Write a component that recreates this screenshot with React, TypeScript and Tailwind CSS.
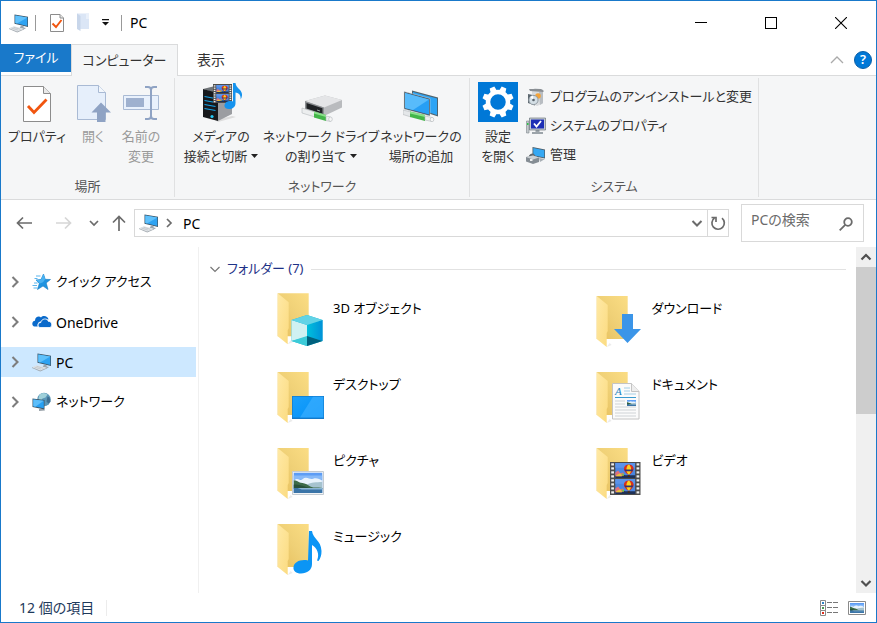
import React from "react";
import type { ReactNode } from "react";

type IconProps = { className?: string };

function PcIcon({ className = "h-5 w-5" }: IconProps) {
  return (
    <svg viewBox="0 0 20 20" className={className} aria-hidden="true">
      <path d="M5.500 1.500 19 3.800V14L5.500 10.800z" fill="#3d5566" />
      <path d="M6.300 2.500 18.300 4.500V13L6.300 10.100z" fill="#2ea3f2" />
      <path d="M6.300 2.500 18.300 4.500 8 10.500 6.300 10.100z" fill="#5fc1fb" />
      <path d="M12 12.400l2.600.6v1.500l2.500.5-2 1.200-4.500-1z" fill="#9aa5ad" />
      <path d="M0 15.300 5 13.300l10 2.400L8.200 18.500z" fill="#dfe3e6" />
      <path d="M0 15.300 8.200 18.500 15 15.700v.9L8.200 19.500 0 16.100z" fill="#a3aab0" />
      <path d="M2.500 15.100l6.500 2M4.500 14.300l7 2" stroke="#b4bbc1" strokeWidth=".6" />
    </svg>
  );
}

function CheckDocIcon({ className }: IconProps) {
  return (
    <svg viewBox="0 0 28 36" className={className} aria-hidden="true">
      <path d="M.5.500h20l7 7v28H.5z" fill="#fff" stroke="#8c8c8c" />
      <path d="M20.500.500v7h7" fill="#e9e9e9" stroke="#8c8c8c" />
      <path d="M5 20l6 6.500L23.500 13.500" fill="none" stroke="#f1550f" strokeWidth="2.800" />
    </svg>
  );
}

function QuickCheckIcon() {
  return (
    <svg viewBox="0 0 14 18" className="h-[18px] w-3.5" aria-hidden="true">
      <path d="M.5.500h9.500l3.500 3.500v13.500H.5z" fill="#fff" stroke="#8c8c8c" />
      <path d="M10 .500V4h3.500" fill="#e9e9e9" stroke="#8c8c8c" />
      <path d="M2.500 9.500l3.500 3.500 5.500-7" fill="none" stroke="#f1550f" strokeWidth="1.900" />
    </svg>
  );
}

function QuickFolderIcon() {
  return (
    <svg viewBox="0 0 14 19" className="h-[19px] w-[14px]" aria-hidden="true">
      <path d="M1 .5h12V16H4z" fill="#dbe6f6" />
      <path d="M1 .5 4.500 3v15L1 16z" fill="#c8d6ea" />
      <path d="M10 .5h3V6h-3z" fill="#e9f0fa" />
    </svg>
  );
}

function OpenIcon() {
  return (
    <svg viewBox="0 0 36 40" className="h-10 w-9" aria-hidden="true">
      <path d="M2.500 3.500h21l7 7v27h-28z" fill="#e6effb" stroke="#a9bad4" />
      <path d="M23.500 3.500v7h7" fill="#f3f7fc" stroke="#a9bad4" />
      <path d="M26 20.500l10 10h-5.500V40h-8.500v-9.500h-5.500z" fill="#8fa3c4" />
    </svg>
  );
}

function RenameIcon() {
  return (
    <svg viewBox="0 0 38 40" className="h-10 w-[38px]" aria-hidden="true">
      <path d="M1.500 13.500h35v14h-35z" fill="#e9f1fc" stroke="#a9bad4" />
      <path d="M4 16h18v9H4z" fill="#9fb1cf" />
      <path d="M23 5h3q3 0 3 3v26q0 3-3 3h-3M35 5h-3q-3 0-3 3v26q0 3 3 3h3" fill="none" stroke="#8fa3c4" strokeWidth="2" />
    </svg>
  );
}

function Balloons() {
  return (
    <g>
      <path d="M0 0h20v16H0z" fill="#4b86e0" />
      <path d="M0 0h20v5H0z" fill="#5b93ea" />
      <path d="M0 13c3-2 7-1 10 0l10 0v3H0z" fill="#1f3157" />
      <path d="M0 10l3-2 2 3 3-1 1 3-3 1H0z" fill="#e0707a" />
      <path d="M1 13l4-2 2 3H1z" fill="#e8c33a" />
      <path d="M6 11l3 1-1 2z" fill="#6ccf3c" />
      <path d="M13.500 1.500c5 0 6 5 3.500 8l-2 2.500h-3L10 9.500c-2.500-3-1.500-8 3.500-8z" fill="#d8301c" />
      <path d="M13.500 1.500c-3 2-3 8-.5 10.500h1c2.500-2.500 2.500-8.500-.5-10.500z" fill="#ffd21c" />
      <path d="M9 7h9l-1 1.800h-7z" fill="#38306e" />
      <path d="M12.500 13h2v2h-2z" fill="#4d2b10" />
    </g>
  );
}

function Film({ x, y, w, h }: { x: number; y: number; w: number; h: number }) {
  const holes = Array.from({ length: 8 }, (_, i) => y + 1.3 + (i * (h - 1)) / 8);
  return (
    <g>
      <rect x={x} y={y} width={w} height={h} fill="#4c4c4c" />
      <svg x={x + w * 0.17} y={y + 1} width={w * 0.66} height={h / 2 - 1.5} viewBox="0 0 20 16" preserveAspectRatio="none">
        <Balloons />
      </svg>
      <svg x={x + w * 0.17} y={y + h / 2 + 0.5} width={w * 0.66} height={h / 2 - 1.5} viewBox="0 0 20 16" preserveAspectRatio="none">
        <Balloons />
      </svg>
      {holes.map((hy) => (
        <g key={hy} fill="#f0f0f0">
          <rect x={x + w * 0.04} y={hy} width={w * 0.09} height={h / 15} />
          <rect x={x + w * 0.87} y={hy} width={w * 0.09} height={h / 15} />
        </g>
      ))}
    </g>
  );
}

function MediaIcon() {
  return (
    <svg viewBox="0 0 42 40" className="h-10 w-[42px]" aria-hidden="true">
      <path d="M32 34l4 1-18 5-3-2z" fill="#dcdcdc" />
      <path d="M3 7l12-3 17 3-14 5z" fill="#6f7478" />
      <path d="M18 11l14-4v25l-14 7z" fill="#9b9da1" />
      <path d="M3 7l15 4v28L3 35z" fill="#17191c" />
      <path d="M4.500 14.500l11 2M4.500 18.500l11 2M4.500 22.500l11 2M4.500 26.500l11 2" stroke="#16a5ea" strokeWidth="1.200" />
      <circle cx="12" cy="34.500" r="1.600" fill="#23c8f5" />
      <Film x={13} y={2} w={19} h={19} />
      <path d="M33 1h2.500c.5 5 6 6.500 6.500 11 .2 2-.5 4-1.500 5.500.8-4.500-2-6.500-5-7V21c0 4-3 6-6.500 6-3 0-5-1.800-4.500-4 .6-3 4.500-4.800 8.500-3.500z" fill="#1593ee" />
    </svg>
  );
}

function CablePlug({ y }: { y: number }) {
  return (
    <g transform={`translate(0 ${y})`}>
      <path d="M2 0l8 2v5L2 4.500z" fill="#e4e7e9" stroke="#b3b8bc" strokeWidth=".6" />
      <path d="M9 1.500l15 3.500v6L9 7z" fill="#43b649" />
      <path d="M9 1.500l15 3.500v2L9 3.500z" fill="#8be08b" />
      <path d="M24 6l7 1.500v4L24 10z" fill="#eceeef" stroke="#b3b8bc" strokeWidth=".6" />
      <ellipse cx="31" cy="9.500" rx="1.800" ry="2.200" fill="#f6f6f6" stroke="#b3b8bc" strokeWidth=".6" />
    </g>
  );
}

function NetDriveIcon() {
  return (
    <svg viewBox="0 0 42 40" className="h-10 w-[42px]" aria-hidden="true">
      <path d="M5 19l20-5.500L42 18v7.500L24 34 5 27z" fill="#b9bbbe" />
      <path d="M5 19l20-5.500L42 18 24 25.500z" fill="#e4e5e7" />
      <path d="M5 19l19 6.500V34L5 27z" fill="#8d9093" />
      <path d="M6.500 21l16 5.300v5.500l-16-5.300z" fill="#1f2225" />
      <path d="M17 28l3 1" stroke="#9aa0a5" />
      <path d="M2 26l13 4v5L2 31z" fill="#eceeef" stroke="#b3b8bc" strokeWidth=".6" />
      <path d="M14 29.500l12 3.500v6l-12-3.500z" fill="#43b649" />
      <path d="M14 29.500l12 3.500v2l-12-3.500z" fill="#8be08b" />
      <path d="M26 34l4.500 1v4.500L26 38.500z" fill="#eceeef" stroke="#b3b8bc" strokeWidth=".6" />
      <ellipse cx="30.500" cy="37.200" rx="1.800" ry="2.200" fill="#f6f6f6" stroke="#b3b8bc" strokeWidth=".6" />
    </svg>
  );
}

function NetPlaceIcon() {
  return (
    <svg viewBox="0 0 36 40" className="h-10 w-9" aria-hidden="true">
      <path d="M9 8.500l26 7v19L9 26z" fill="#50646f" />
      <path d="M10 10l24 6.500v16.500L10 25z" fill="#2da4f5" />
      <path d="M1 9.500l26 7v17.500L1 27z" fill="#46555f" stroke="#d4dce1" strokeWidth=".5" />
      <path d="M2 11l24 6.500v15L2 26z" fill="#279ff5" />
      <path d="M2 11l24 6.500-16 10.500L2 26z" fill="#58bbfb" />
      <g transform="translate(-2 0)"><CablePlug y={28} /></g>
    </svg>
  );
}

function GearIcon() {
  const teeth = [0, 45, 90, 135, 180, 225, 270, 315];
  return (
    <svg viewBox="0 0 40 40" className="h-10 w-10" aria-hidden="true">
      <path d="M0 0h40v40H0z" fill="#0078d7" />
      <circle cx="20" cy="20" r="10" fill="none" stroke="#fff" strokeWidth="4.500" />
      {teeth.map((a) => (
        <path key={a} d="M16.500 10l1-5.700h5l1 5.700z" fill="#fff" transform={`rotate(${a + 22.5} 20 20)`} />
      ))}
    </svg>
  );
}

function UninstallIcon() {
  return (
    <svg viewBox="0 0 20 20" className="h-5 w-5" aria-hidden="true">
      <path d="M6 3l3-2 8 1.500v14L11 19 6 16z" fill="#d9dcdf" />
      <path d="M3 2l12 0 3 2-1 1-13-1z" fill="#8a8f94" />
      <path d="M13 5l4 0v11l-3 2z" fill="#b8bdc2" />
      <circle cx="12" cy="9" r="2.800" fill="#f2a33a" />
      <path d="M2 7l7 1.500v10L2 16z" fill="#5d6870" />
      <circle cx="7.500" cy="13" r="4.600" fill="#d4dfe6" stroke="#929ba2" />
      <path d="M7.500 13L4 10l3-1.500z" fill="#fff" />
      <circle cx="7.500" cy="13" r="1.300" fill="#59636b" />
    </svg>
  );
}

function SystemPropsIcon() {
  return (
    <svg viewBox="0 0 20 20" className="h-5 w-5" aria-hidden="true">
      <path d="M.5 5h2.500v12H.5z" fill="#c4c9cd" stroke="#7e868c" strokeWidth=".6" />
      <path d="M1 7h1.500v2H1z" fill="#2fc24b" />
      <path d="M9.500 13h4v3h3.500v2h-11v-2h3.500z" fill="#9ca4aa" />
      <path d="M3.500 2h16v12h-16z" fill="#c4ccd3" stroke="#5a646c" strokeWidth=".6" />
      <path d="M5 3.500h13v9H5z" fill="#1c2fb5" />
      <path d="M8 7.500l2.500 3L15 5" fill="none" stroke="#fff" strokeWidth="1.800" />
    </svg>
  );
}

function ManageIcon() {
  return (
    <svg viewBox="0 0 20 20" className="h-5 w-5" aria-hidden="true">
      <path d="M6.500 2L19 4.500v9L6.500 11z" fill="#4a5c68" />
      <path d="M7.300 3l11 2.200v7.300l-11-2.200z" fill="#35a8f3" />
      <path d="M13 13l6 1-5 3z" fill="#a8afb5" />
      <path d="M3 10.500q3-3.500 6-.5v2H8q-2-2-4 0H3z" fill="#5f676d" />
      <path d="M0 12l7-1.500 6 2v4.500L7 19l-7-2.500z" fill="#858d94" />
      <path d="M0 12l7-1.500 6 2-6 2z" fill="#cdd2d6" />
      <path d="M4 14h2.500v2H4z" fill="#eef0f1" />
    </svg>
  );
}

function StarIcon() {
  return (
    <svg viewBox="0 0 20 20" className="h-5 w-5" aria-hidden="true">
      <path d="M11.500 2l1.700 5.300 5.300.2-4.300 3.400L16 17.500l-5-3.500-5.500 3.500 1.800-6L4 8l5-.5z" fill="#1f93e0" stroke="#1379c0" strokeWidth=".6" />
      <path d="M11.500 2l1.700 5.300-2.200 3-3.200 1.200L4 8l5-.5z" fill="#49b2f2" />
      <path d="M4 4h4.500M2.500 6.500h3M2 11h3.500M.5 13.500h4.500M1.500 16h4" stroke="#5bb5ee" />
    </svg>
  );
}

function OneDriveIcon() {
  return (
    <svg viewBox="0 0 20 20" className="h-5 w-5" aria-hidden="true">
      <path d="M2.500 14.500C-.5 14-.5 9 3 8.700 3 5 7 3.500 9 5.500c2-2.500 7-1.500 7.500 2-4-1.500-6 0-6.800 2-3-.3-4.700 2-4 5z" fill="#0a6acb" />
      <path d="M8 15.500c-2.800-.5-2.500-5 .8-5 .5-4 6.500-5 7.700-1 3.500-.5 4.500 5 1.500 6z" fill="#0a6acb" stroke="#fff" strokeWidth=".8" />
    </svg>
  );
}

function NetworkIcon() {
  return (
    <svg viewBox="0 0 20 20" className="h-5 w-5" aria-hidden="true">
      <circle cx="12" cy="7.500" r="6.800" fill="#5b97b8" />
      <path d="M7.500 2.500q4-3 8 0l-2 3-3 1-2 3-2-3z" fill="#9fd0d9" />
      <path d="M15.500 4.500l2 1 1 4-2 2-2-2z" fill="#3f6f92" />
      <path d="M7 17h5l1 1.500-6 .5z" fill="#9aa3aa" />
      <path d="M.5 6.500L12.500 8v9.500L.5 15z" fill="#3c5668" />
      <path d="M1.300 7.500l10.500 1.300v7.500L1.300 14.300z" fill="#27a0f3" />
      <path d="M1.300 7.500l10.500 1.300-8.500 5.900-2-.4z" fill="#5dbefa" />
    </svg>
  );
}

function Landscape() {
  return (
    <g>
      <path d="M0 0h28v20H0z" fill="#5c9cf5" />
      <path d="M0 3h28v4H0z" fill="#86b9f8" />
      <path d="M0 8c2-2 4-2 6-1s3-2 6-2 4 2 7 1 6 0 9 2v7H0z" fill="#e9f3fc" />
      <path d="M13 12c4-3 9-2 15-3v6H13z" fill="#a6c3cf" />
      <path d="M0 7.500c3 0 5 2 7 2.500s5 .5 8 3 8 1.500 13 2v1H0z" fill="#3c6b49" />
      <path d="M0 12c5-1 10 2 16 3H0z" fill="#27503a" />
      <path d="M0 15h28v5H0z" fill="#3b75a8" />
      <path d="M4 15h24v1.500H8z" fill="#8db6d3" />
    </g>
  );
}

function FolderIcon({ children, raised }: { children: ReactNode; raised?: boolean }) {
  return (
    <svg viewBox="0 0 50 58" className="h-[58px] w-[50px] shrink-0" aria-hidden="true">
      <defs>
        <linearGradient id="folder-back" x1="0" x2="1" y1="1" y2="0">
          <stop offset="0" stopColor="#e6bf5c" />
          <stop offset=".5" stopColor="#efd076" />
          <stop offset="1" stopColor="#fbdd84" />
        </linearGradient>
        <linearGradient id="folder-front" x1="0" x2="1" y1="0" y2="1">
          <stop offset="0" stopColor="#ffe9a6" />
          <stop offset="1" stopColor="#fbdb80" />
        </linearGradient>
        <linearGradient id="cube-right" x1="0" x2="1">
          <stop offset="0" stopColor="#00c0dc" />
          <stop offset="1" stopColor="#0091d8" />
        </linearGradient>
        <linearGradient id="screen" x1="0" x2="1" y1="0" y2="1">
          <stop offset="0" stopColor="#1ba0fb" />
          <stop offset="1" stopColor="#0090f8" />
        </linearGradient>
      </defs>
      <g transform={raised ? "translate(-.3 .3)" : "translate(-.3 3)"}>
        <path d="M13 53l5-2-2-2z" fill="#ececec" />
        <path d="M3 2h31v43H3z" fill="url(#folder-back)" />
        <path d="M3 2l11 9v26l-1 2v14L3 45z" fill="url(#folder-front)" />
      </g>
      {children}
    </svg>
  );
}

const CubeArt = (
  <g>
    <path d="M16.500 29L32 24l15.500 5v21L32 55l-15.500-5z" fill="#16b5d4" />
    <path d="M16.500 29L32 34v12l-15.500 4z" fill="#d0f1f2" />
    <path d="M32 34l15.500-5v21L32 45z" fill="url(#cube-right)" />
    <path d="M16.500 29L32 24l15.500 5L32 34z" fill="#62d3e6" />
    <path d="M16.500 50L32 45v10z" fill="#3ccbd8" />
    <path d="M32 45l15.500 5L32 55z" fill="#00617e" />
  </g>
);

const DownloadArt = <path d="M28 23h11v15h8L33.500 52 20 38h8z" fill="#3b95e8" />;

const DesktopArt = (
  <g>
    <path d="M17 29h32v23H17z" fill="#1479c9" />
    <path d="M17.700 29.700h30.600v20.800H17.700z" fill="url(#screen)" />
    <path d="M38 29.700h10.300v20.800H25z" fill="#3aaeff" opacity=".7" />
  </g>
);

const DocumentArt = (
  <g>
    <path d="M18.500 16.500h19l7.500 8v27.500H18.500z" fill="#fbfbfb" stroke="#c4c4c4" />
    <path d="M37.500 16.500v8H45" fill="#eee" stroke="#c4c4c4" />
    <text x="21" y="28" fontSize="11" fontStyle="italic" fontFamily="Liberation Serif, serif" fill="#1b82bd">A</text>
    <path d="M30 21h6M30 24h6M30 27h12" stroke="#a4cfe6" />
    <path d="M21 30.500h21" stroke="#3a9bd0" />
    <path d="M21 34h10M21 37h10M21 40h21M21 43h21M21 46h21M21 49h21" stroke="#cfd3d6" />
    <svg x="33" y="33" width="9" height="6" viewBox="0 0 28 20" preserveAspectRatio="none"><Landscape /></svg>
  </g>
);

const PictureArt = (
  <g>
    <path d="M17.500 28.500h31v23h-31z" fill="#f3f4f5" stroke="#c3cbd2" />
    <svg x="18.500" y="29.500" width="29" height="20.500" viewBox="0 0 28 20" preserveAspectRatio="none"><Landscape /></svg>
  </g>
);

const VideoArt = <Film x={16} y={19} w={30.5} h={33} />;

const MusicArt = (
  <path
    d="M34 12h3c1 8 9 9 9.500 20 .1 4-1 7.500-3 10-.8 0-1.500-.3-1.300-1 2.500-6 0-12-5.200-15v19c0 6-5 9.500-11 9.500-5 0-8-2.500-7.500-6.500.7-5 7-8 14.500-6.500z"
    fill="#0b95f5"
  />
);

const folders: { name: string; art: ReactNode; raised?: boolean }[] = [
  { name: "3D オブジェクト", art: CubeArt, raised: true },
  { name: "ダウンロード", art: DownloadArt },
  { name: "デスクトップ", art: DesktopArt },
  { name: "ドキュメント", art: DocumentArt },
  { name: "ピクチャ", art: PictureArt },
  { name: "ビデオ", art: VideoArt },
  { name: "ミュージック", art: MusicArt },
];

const places: { name: string; icon: ReactNode; size: string; current?: boolean }[] = [
  { name: "クイック アクセス", icon: <StarIcon />, size: "text-[13px]" },
  { name: "OneDrive", icon: <OneDriveIcon />, size: "text-[14px]" },
  { name: "PC", icon: <PcIcon />, size: "text-[14px]", current: true },
  { name: "ネットワーク", icon: <NetworkIcon />, size: "text-[13px]" },
];

function Chevron({ d, className = "", width = 1.5 }: { d: string; className?: string; width?: number }) {
  return (
    <svg viewBox="0 0 12 12" className={`h-3 w-3 ${className}`} fill="none" stroke="currentColor" strokeWidth={width} aria-hidden="true">
      <path d={d} />
    </svg>
  );
}

const DOWN = "M1.500 4L6 8.500 10.500 4";
const UP = "M1.500 8.500L6 4l4.500 4.500";
const RIGHT = "M4 2L8 6 4 10";
const TREE_RIGHT = "M3.500 1L8.500 6 3.500 11";

function BigButton({
  icon,
  lines,
  className,
  disabled,
  menu,
}: {
  icon: ReactNode;
  lines: string[];
  className: string;
  disabled?: boolean;
  menu?: boolean;
}) {
  return (
    <button
      type="button"
      disabled={disabled}
      className={`flex shrink-0 flex-col items-center whitespace-nowrap leading-5 ${disabled ? "text-[#9a9a9a]" : "text-[#333]"} ${className}`}
    >
      <span className="mb-1 flex h-10 items-center">{icon}</span>
      {lines.map((line, i) => (
        <span key={line} className="flex items-center gap-1">
          {line}
          {menu && i === lines.length - 1 && (
            <svg viewBox="0 0 7 4" className="h-1 w-[7px]" aria-hidden="true">
              <path d="M0 0h7L3.500 4z" fill="#222" />
            </svg>
          )}
        </span>
      ))}
    </button>
  );
}

function Group({ label, children, className }: { label: string; children: ReactNode; className: string }) {
  return (
    <section aria-label={label} className={`flex shrink-0 flex-col border-r border-[#e0e1e2] ${className}`}>
      <div className="flex h-[98px] items-start pl-1 pt-1">{children}</div>
      <p className="text-center leading-5 text-[#555]">{label}</p>
    </section>
  );
}

function SmallButton({ icon, children }: { icon: ReactNode; children: ReactNode }) {
  return (
    <button type="button" className="flex h-[29px] items-center gap-1 whitespace-nowrap text-[#333]">
      {icon}
      {children}
    </button>
  );
}

export default function App() {
  return (
    <div className="flex min-h-screen flex-col border border-[#1979ca] bg-white font-['Noto_Sans','Noto_Sans_CJK_JP',sans-serif] text-[13px] text-black [font-feature-settings:'palt']">
      <header className="flex h-[43px] items-center pl-2">
        <PcIcon />
        <span className="ml-1.5 h-4 w-px bg-[#999]" />
        <button type="button" aria-label="プロパティ" className="ml-3.5">
          <QuickCheckIcon />
        </button>
        <button type="button" aria-label="新しいフォルダー" className="ml-3">
          <QuickFolderIcon />
        </button>
        <button type="button" aria-label="クイック アクセス ツール バーのカスタマイズ" className="ml-3">
          <svg viewBox="0 0 7 7" className="h-[7px] w-[7px]" aria-hidden="true">
            <path d="M0 0h7v1.200H0zM0 3h7L3.500 6.500z" fill="#111" />
          </svg>
        </button>
        <span className="ml-3 h-4 w-px bg-[#999]" />
        <h1 className="ml-2 text-[14px]">PC</h1>
        <div className="ml-auto flex self-stretch">
          <button type="button" aria-label="最小化" className="flex w-[70px] items-center justify-center">
            <span className="h-px w-3 bg-black" />
          </button>
          <button type="button" aria-label="最大化" className="flex w-[70px] items-center justify-center">
            <span className="h-3 w-3 border border-black" />
          </button>
          <button type="button" aria-label="閉じる" className="flex w-[70px] items-center justify-center">
            <svg viewBox="0 0 12 12" className="h-3 w-3" stroke="#000" strokeWidth="1.100" aria-hidden="true">
              <path d="M0 0l12 12M12 0L0 12" />
            </svg>
          </button>
        </div>
      </header>

      <nav aria-label="リボン タブ" className="flex h-8 items-stretch">
        <div className="flex w-[70px] flex-col border-b border-[#dadbdc]">
          <button type="button" className="h-7 bg-[#1979ca] text-white">ファイル</button>
        </div>
        <button type="button" className="w-[107px] whitespace-nowrap border border-b-0 border-[#dadbdc] bg-[#f5f6f7] text-[#333]">
          コンピューター
        </button>
        <div className="flex flex-1 items-center border-b border-[#dadbdc]">
          <button type="button" className="w-[66px] text-[14px] text-[#333]">表示</button>
          <button type="button" aria-label="リボンの最小化" className="ml-auto mr-2.5 text-[#aaa]">
            <svg viewBox="0 0 14 14" className="h-3.5 w-3.5" fill="none" stroke="currentColor" strokeWidth="1.300" aria-hidden="true">
              <path d="M1 10l6-6 6 6" />
            </svg>
          </button>
          <button
            type="button"
            aria-label="ヘルプ"
            className="mr-1 flex h-[18px] w-[18px] items-center justify-center rounded-full border border-[#0a5fa8] bg-[#0078d7] font-semibold leading-none text-white"
          >
            ?
          </button>
        </div>
      </nav>

      <div className="flex h-[124px] border-b border-[#dadbdc] bg-[#f5f6f7] py-0.5">
        <Group label="場所" className="w-[174px]">
          <BigButton icon={<CheckDocIcon className="mt-1 h-9 w-7" />} lines={["プロパティ"]} className="w-16" />
          <BigButton icon={<OpenIcon />} lines={["開く"]} className="w-12" disabled />
          <BigButton icon={<RenameIcon />} lines={["名前の", "変更"]} className="w-12" disabled />
        </Group>
        <Group label="ネットワーク" className="w-[295px]">
          <BigButton icon={<MediaIcon />} lines={["メディアの", "接続と切断"]} className="w-[84px]" menu />
          <BigButton icon={<NetDriveIcon />} lines={["ネットワーク ドライブ", "の割り当て"]} className="w-[116px]" menu />
          <BigButton icon={<NetPlaceIcon />} lines={["ネットワークの", "場所の追加"]} className="w-[84px]" />
        </Group>
        <Group label="システム" className="w-[289px]">
          <BigButton icon={<GearIcon />} lines={["設定", "を開く"]} className="w-12" />
          <div className="ml-1 flex flex-col">
            <SmallButton icon={<UninstallIcon />}>プログラムのアンインストールと変更</SmallButton>
            <SmallButton icon={<SystemPropsIcon />}>システムのプロパティ</SmallButton>
            <SmallButton icon={<ManageIcon />}>管理</SmallButton>
          </div>
        </Group>
      </div>

      <div className="flex h-[46px] items-center pl-[15px] pr-3 text-[#6b6b6b]">
        <button type="button" aria-label="戻る">
          <svg viewBox="0 0 16 14" className="h-3.5 w-4" fill="none" stroke="#6b6b6b" strokeWidth="1.700" aria-hidden="true">
            <path d="M16 7H1.500M7 1.500L1.500 7 7 12.500" />
          </svg>
        </button>
        <button type="button" aria-label="進む" disabled className="ml-6">
          <svg viewBox="0 0 16 14" className="h-3.5 w-4" fill="none" stroke="#d6d6d6" strokeWidth="1.700" aria-hidden="true">
            <path d="M0 7h14.500M9 1.500L14.500 7 9 12.500" />
          </svg>
        </button>
        <button type="button" aria-label="最近表示した場所" className="ml-4">
          <Chevron d="M2 4l4 4 4-4" width={1.7} />
        </button>
        <button type="button" aria-label="上へ" className="ml-3">
          <svg viewBox="0 0 14 16" className="h-4 w-3.5" fill="none" stroke="#6b6b6b" strokeWidth="1.700" aria-hidden="true">
            <path d="M7 16V1.500M1 7.500l6-6 6 6" />
          </svg>
        </button>
        <div className="ml-2 flex h-7 flex-1 items-center border border-[#d9d9d9] pl-1">
          <PcIcon />
          <Chevron d={RIGHT} className="ml-1" width={1.7} />
          <button type="button" className="ml-2 text-[14px] text-black">PC</button>
          <button type="button" aria-label="以前の場所" className="ml-auto mr-1">
            <Chevron d={DOWN} width={2} />
          </button>
          <button type="button" aria-label="最新の情報に更新" className="flex h-full w-[21px] items-center justify-center border-l border-[#d9d9d9]">
            <svg viewBox="0 0 16 16" className="h-4 w-4" fill="none" stroke="#6b6b6b" strokeWidth="1.700" aria-hidden="true">
              <path d="M12 3.200A6.200 6.200 0 1 1 4.500 3M1.500 2.500H6V7" />
            </svg>
          </button>
        </div>
        <label className="ml-3 flex h-[38px] w-[123px] items-start border border-[#d9d9d9] pl-[9px] pr-2.5 pt-1">
          <input
            type="search"
            aria-label="PCの検索"
            placeholder="PCの検索"
            className="h-5 w-20 min-w-0 bg-transparent text-[14px] outline-none placeholder:text-[#6b6b6b]"
          />
          <svg viewBox="0 0 14 14" className="ml-auto mt-2 h-3.5 w-3.5 shrink-0" fill="none" stroke="#6b6b6b" strokeWidth="1.800" aria-hidden="true">
            <circle cx="9" cy="5" r="3.800" />
            <path d="M6.200 7.800L.7 13.300" />
          </svg>
        </label>
      </div>

      <div className="flex flex-1 pt-px">
        <aside className="w-[198px] border-r border-[#f0f0f0] pr-0.5 pt-5">
          <ul className="flex flex-col gap-2.5">
            {places.map((p) => (
              <li key={p.name}>
                <button
                  type="button"
                  aria-current={p.current ? "page" : undefined}
                  className={`flex h-[30px] w-full items-center pl-2 ${p.size} ${p.current ? "bg-[#cde8ff]" : ""}`}
                >
                  <Chevron d={TREE_RIGHT} className="mr-[11px] text-[#7d7d7d]" width={2.1} />
                  {p.icon}
                  <span className="ml-1">{p.name}</span>
                </button>
              </li>
            ))}
          </ul>
        </aside>

        <main className="flex-1 pl-2.5 pr-2.5 pt-3">
          <div className="flex h-5 items-center">
            <Chevron d={DOWN} className="text-[#777]" width={1.2} />
            <h2 className="ml-1.5 text-[#1e3287]">フォルダー (7)</h2>
            <span className="ml-2 h-px flex-1 bg-[#e2e2e2]" />
          </div>
          <ul className="mt-3 grid grid-cols-2 gap-y-[18px]">
            {folders.map((f) => (
              <li key={f.name} className="pl-[66px]">
                <button type="button" className="flex items-start gap-2">
                  <FolderIcon raised={f.raised}>{f.art}</FolderIcon>
                  <span className="pt-[7px] leading-5">{f.name}</span>
                </button>
              </li>
            ))}
          </ul>
        </main>

        <div className="flex w-5 flex-col bg-[#f0f0f0] text-[#505050]">
          <button type="button" aria-label="上へスクロール" className="flex h-5 items-center justify-center">
            <Chevron d={UP} width={2.2} />
          </button>
          <span className="h-[147px] bg-[#cdcdcd]" />
          <button type="button" aria-label="下へスクロール" className="mt-auto flex h-5 items-center justify-center">
            <Chevron d={DOWN} width={2.2} />
          </button>
        </div>
      </div>

      <footer className="flex h-[29px] items-center pl-[18px] pr-2.5 text-[14px] text-[#1e395b]">
        <span>12 個の項目</span>
        <span className="ml-3 h-4 w-px bg-[#ececec]" />
        <button type="button" aria-label="詳細" className="ml-auto">
          <svg viewBox="0 0 18 16" className="h-4 w-[18px]" fill="none" aria-hidden="true">
            <path d="M.5.500h5v5h-5zM.5 5.500h5v5h-5zM.5 10.500h5v5h-5z" stroke="#8a8a8a" />
            <path d="M2 2h2v2H2z" fill="#2f83c5" />
            <path d="M2 7h2v2H2z" fill="#4a9a53" />
            <path d="M2 12h2v2H2z" fill="#e02d1b" />
            <path d="M7 2.500h5M13 2.500h5M7 7.500h5M13 7.500h5M7 12.500h5M13 12.500h5" stroke="#777" />
          </svg>
        </button>
        <button type="button" aria-label="大アイコン" className="ml-2.5">
          <svg viewBox="0 0 18 14" className="h-3.5 w-[18px]" aria-hidden="true">
            <path d="M.5.500h17v13H.5z" fill="#fff" stroke="#8a8a8a" />
            <svg x="2" y="2" width="14" height="10" viewBox="0 0 28 20" preserveAspectRatio="none"><Landscape /></svg>
          </svg>
        </button>
      </footer>
    </div>
  );
}
